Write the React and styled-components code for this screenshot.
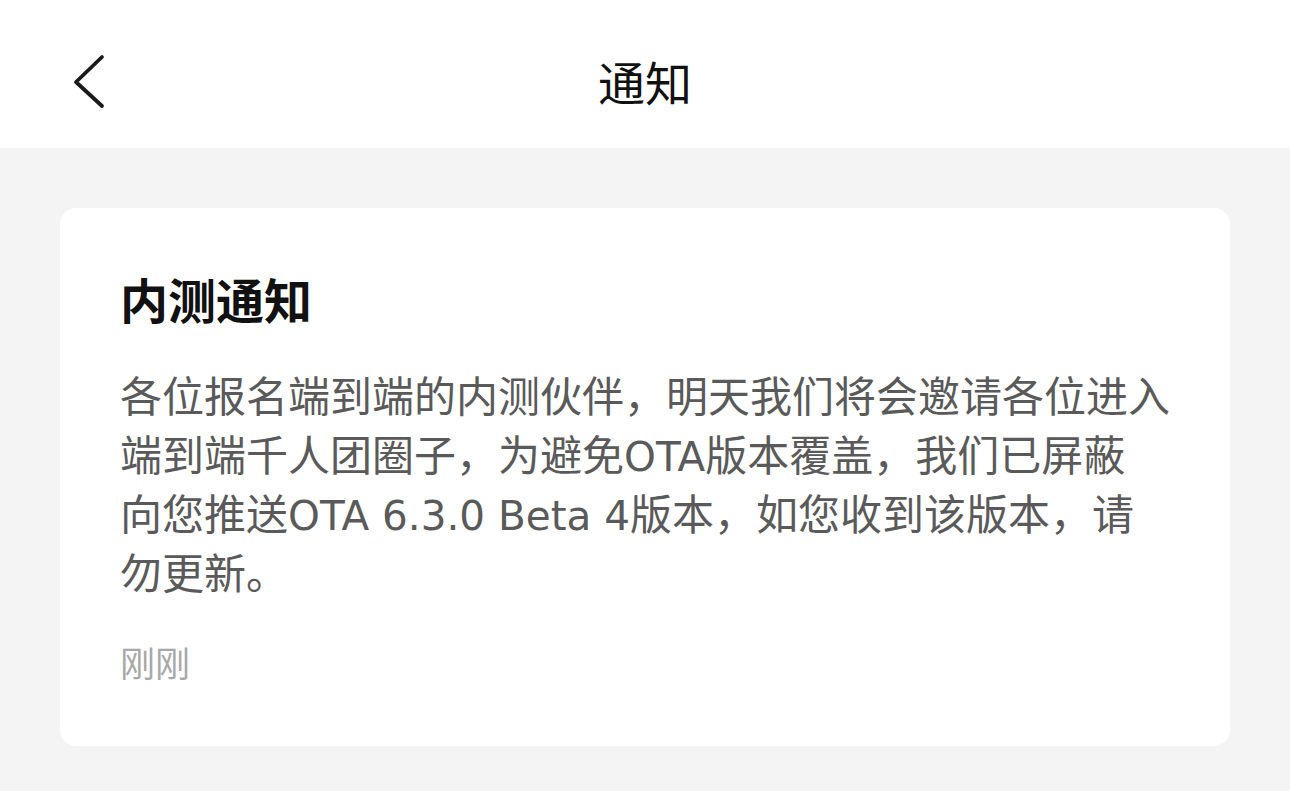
import React from "react";
import styled, { createGlobalStyle } from "styled-components";

const Global = createGlobalStyle`
  html, body { margin: 0; padding: 0; background: #f4f4f4; }
  body { font-family: "Noto Sans CJK SC", "Noto Sans", sans-serif; }
  * { box-sizing: border-box; }
`;

const Page = styled.div`
  width: 1290px;
  height: 791px;
  background: #f4f4f4;
  display: flex;
  flex-direction: column;
  overflow: hidden;
`;

const Header = styled.header`
  height: 148px;
  background: #ffffff;
  display: grid;
  grid-template-columns: 200px 1fr 200px;
  align-items: center;
  padding: 12px 0 0 0;
`;

const BackButton = styled.button`
  border: none;
  background: none;
  padding: 0;
  margin-left: 72px;
  margin-top: 4px;
  width: 40px;
  height: 60px;
  display: flex;
  align-items: center;
  justify-content: flex-start;
  cursor: pointer;
`;

const HeaderTitle = styled.h1`
  margin: 0;
  text-align: center;
  font-size: 47px;
  font-weight: 400;
  color: #111;
  line-height: 1;
`;

const Content = styled.main`
  padding: 60px 60px 0;
`;

const Card = styled.section`
  background: #ffffff;
  border-radius: 16px;
  padding: 58px 40px 60px 60px;
  display: flex;
  flex-direction: column;
`;

const Title = styled.h2`
  margin: 0;
  font-size: 48px;
  font-weight: 700;
  color: #111;
  line-height: 64px;
`;

const Body = styled.p`
  margin: 34px 0 0;
  font-size: 42px;
  line-height: 59px;
  color: #5a5a5a;
  white-space: nowrap;
`;

const Latin = styled.span`
  font-family: "DejaVu Sans", "Noto Sans", sans-serif;
  font-size: 40.5px;
  line-height: 1;
`;

const Time = styled.span`
  margin-top: 38px;
  font-size: 35px;
  line-height: 48px;
  color: #a8a8a8;
`;

export default function App() {
  return (
    <>
      <Global />
      <Page>
        <Header>
          <BackButton aria-label="返回">
            <svg width="34" height="56" viewBox="0 0 34 56" fill="none">
              <path
                d="M30 3 L4 28 L30 52"
                stroke="#1a1a1a"
                strokeWidth="3.8"
                strokeLinecap="round"
                strokeLinejoin="round"
              />
            </svg>
          </BackButton>
          <HeaderTitle>通知</HeaderTitle>
          <div />
        </Header>
        <Content>
          <Card>
            <Title>内测通知</Title>
            <Body>
              各位报名端到端的内测伙伴，明天我们将会邀请各位进入
              <br />
              端到端千人团圈子，为避免<Latin>OTA</Latin>版本覆盖，我们已屏蔽
              <br />
              向您推送<Latin>OTA 6.3.0 Beta 4</Latin>版本，如您收到该版本，请
              <br />
              勿更新。
            </Body>
            <Time>刚刚</Time>
          </Card>
        </Content>
      </Page>
    </>
  );
}
